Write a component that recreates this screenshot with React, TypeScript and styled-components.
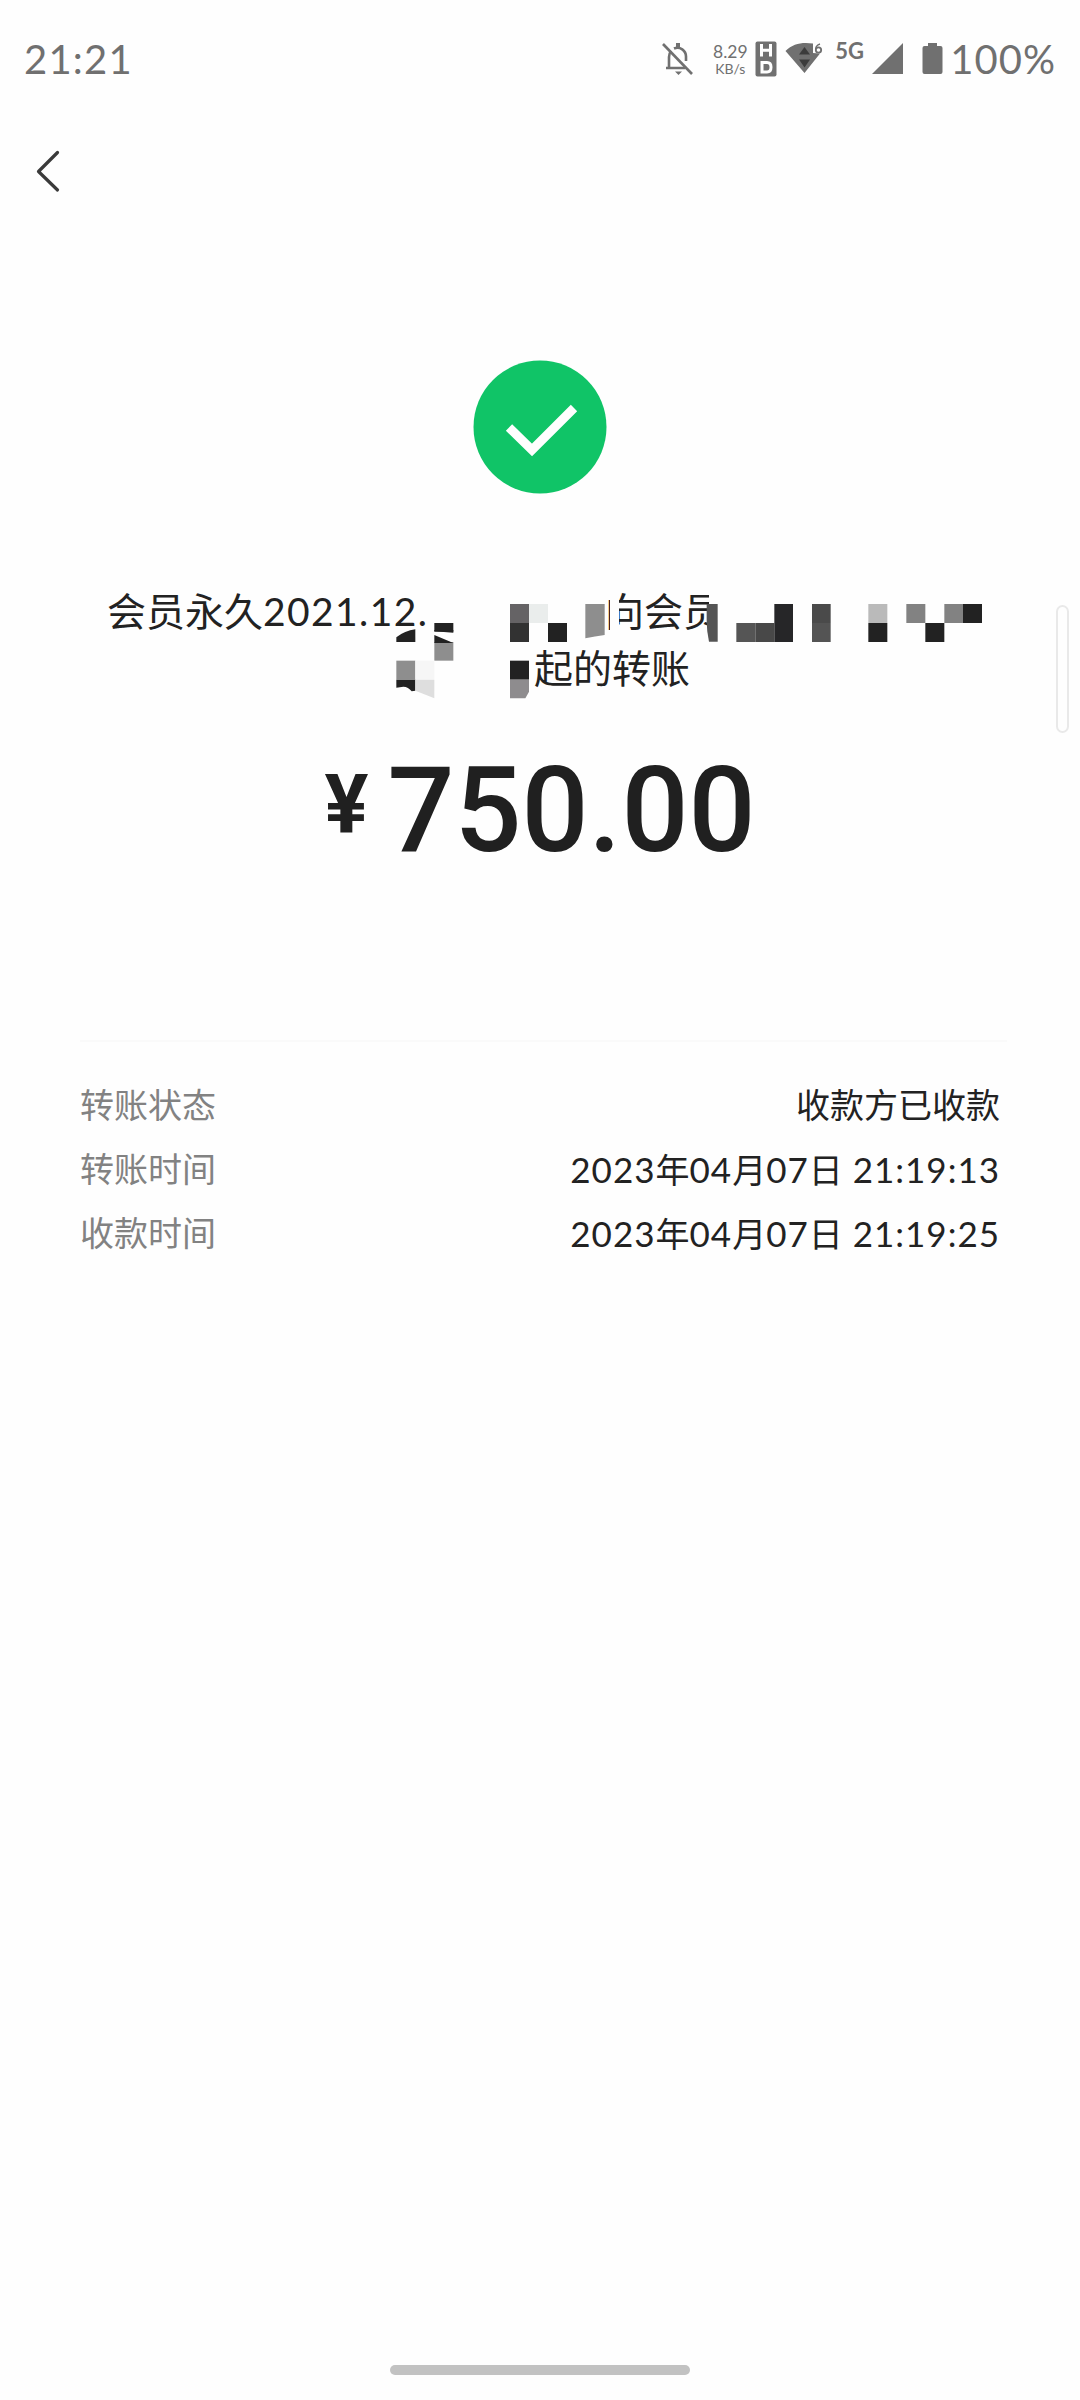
import React from "react";
import styled, { createGlobalStyle } from "styled-components";

const GlobalStyle = createGlobalStyle`
  body { margin: 0; background: #fefefe; }
  * { box-sizing: border-box; }
`;

const Screen = styled.div`
  position: relative;
  display: flex;
  flex-direction: column;
  width: 1080px;
  height: 2400px;
  background: #fefefe;
  color: #222;
  font-family: Lato, "Noto Sans CJK SC", sans-serif;
  overflow: hidden;
`;

const StatusBar = styled.header`
  display: flex;
  align-items: center;
  justify-content: space-between;
  height: 116px;
  padding: 2px 24px 0 24px;
  color: #707070;
`;

const StatusText = styled.span<{ $spacing: number }>`
  font-size: 40px;
  line-height: 48px;
  letter-spacing: ${(p) => p.$spacing}px;
`;

const StatusIcons = styled.div`
  display: flex;
  align-items: center;
  height: 48px;
`;

const Glyph = styled.svg<{ $gap: number }>`
  display: block;
  flex: none;
  margin-right: ${(p) => p.$gap}px;
`;

const Speed = styled.div`
  display: flex;
  flex-direction: column;
  align-items: center;
  width: 38px;
  margin-right: 6px;
  padding-top: 1px;
`;

const SpeedLine = styled.span<{ $size: number }>`
  font-size: ${(p) => p.$size}px;
  line-height: 17px;
  white-space: nowrap;
`;

const Network = styled.span`
  width: 37px;
  height: 40px;
  font: 700 22px/24px Lato, sans-serif;
`;

const NavBar = styled.nav`
  display: flex;
  align-items: center;
  height: 110px;
  padding-left: 35px;
`;

const BackButton = styled.button`
  display: flex;
  padding: 0;
  border: 0;
  background: none;
`;

const Result = styled.section`
  display: flex;
  flex-direction: column;
  align-items: center;
  padding-top: 134px;
`;

const Title = styled.div`
  position: relative;
  width: 900px;
  height: 140px;
  margin-top: 76px;
  padding: 13px 0 0 17px;
`;

const TitleLine = styled.div<{ $indent?: number }>`
  display: flex;
  height: 57px;
  padding-left: ${(p) => p.$indent ?? 0}px;
  font-size: 39px;
  line-height: 57px;
  white-space: pre;
`;

const TitleDate = styled.span`
  width: 342px;
  letter-spacing: 1.4px;
`;

const Mosaic = styled.svg`
  position: absolute;
  left: 0;
  top: 0;
`;

const Amount = styled.div`
  display: flex;
  align-items: flex-start;
  height: 140px;
  margin-top: 32px;
  font-family: Roboto, sans-serif;
  color: #202020;
`;

const Currency = styled.span`
  margin-right: 19px;
  padding-top: 14px;
  font-size: 82px;
  font-weight: 700;
  line-height: 96px;
`;

const Figure = styled.span`
  font-size: 118px;
  font-weight: 500;
  line-height: 138px;
`;

const Details = styled.dl`
  display: flex;
  flex-direction: column;
  margin: 158px 73px 0 80px;
  padding: 31px 7px 0 0;
  border-top: 2px solid #fafafa;
`;

const DetailRow = styled.div`
  display: flex;
  justify-content: space-between;
  height: 64px;
  font-size: 34px;
  line-height: 64px;
`;

const Label = styled.dt`
  color: #828282;
`;

const Value = styled.dd`
  margin: 0;
  white-space: pre;
`;

const Num = styled.span`
  font-size: 35px;
  letter-spacing: 1px;
`;

const ScrollThumb = styled.div`
  position: absolute;
  left: 1056px;
  top: 605px;
  width: 13px;
  height: 128px;
  border: 2px solid #e9e9e9;
  border-radius: 7px;
`;

const HomeArea = styled.footer`
  display: flex;
  justify-content: center;
  margin-top: auto;
  padding-bottom: 25px;
`;

const HomeBar = styled.div`
  width: 300px;
  height: 10px;
  border-radius: 5px;
  background: #c2c2c2;
`;

type Cell = [x: number, y: number, w: number, h: number, fill: string];

const cells: Cell[] = [
  [1033, 159, 57, 26, "#222"],
  [1033, 216, 57, 56, "#8e8e8e"],
  [919, 272, 57, 57, "#8e8e8e"],
  [976, 272, 57, 57, "#f6f6f6"],
  [1260, 102, 57, 57, "#656365"],
  [1317, 102, 57, 57, "#eaedec"],
  [1260, 159, 57, 57, "#323232"],
  [1374, 159, 57, 57, "#222"],
  [1260, 272, 57, 57, "#222"],
  [1939, 159, 57, 57, "#555"],
  [1996, 159, 57, 57, "#484848"],
  [2053, 102, 56, 114, "#262628"],
  [2166, 102, 56, 57, "#4a4a4a"],
  [2166, 159, 56, 57, "#545454"],
  [2335, 102, 57, 57, "#bababa"],
  [2335, 159, 57, 57, "#222"],
  [2449, 102, 57, 57, "#828282"],
  [2506, 159, 57, 57, "#222"],
  [2563, 102, 56, 57, "#828282"],
  [2619, 102, 57, 57, "#222"],
];

const details = [
  { label: "转账状态", value: ["收款方已收款"] },
  { label: "转账时间", value: ["2023", "年", "04", "月", "07", "日", " 21:19:13"] },
  { label: "收款时间", value: ["2023", "年", "04", "月", "07", "日", " 21:19:25"] },
];

const BellOff = () => (
  <Glyph $gap={18} width="32" height="34" viewBox="0 0 32 34" fill="none" stroke="#707070" strokeWidth="2.6">
    <path d="M2 2 31 32" />
    <path d="M5 26H24M8 26V15C8 12.5 8.8 10.5 10 9M13 6.5C19 4 25 8.5 25 14.5V19" />
    <path d="M17 1V5" strokeWidth="4" />
    <path d="M14 29.5H21L17.5 33Z" fill="#707070" stroke="none" />
  </Glyph>
);

const HdBadge = () => (
  <Glyph $gap={8} width="22" height="36" viewBox="0 0 22 36" fill="none">
    <rect x="0.5" y="0.5" width="21" height="35" rx="2" fill="#707070" />
    <path d="M6.5 3V15.5M15.5 3V15.5M6.5 9.3H15.5" stroke="#fefefe" strokeWidth="3" />
    <path d="M7 21.5H12Q16 21.5 16 26.3Q16 31 12 31H7Z" stroke="#fefefe" strokeWidth="3" />
  </Glyph>
);

const Wifi = () => (
  <Glyph $gap={12} width="38" height="36" viewBox="0 0 38 36">
    <path d="M0.5 10C8 2.5 17 1 28 2.5V12L35 12.5 19.5 32Z" fill="#707070" />
    <path d="M14 13.5 19.5 6 25 13.5Z" fill="#3c3c3c" />
    <path d="M14 18.5H25L19.5 26.5Z" fill="#3c3c3c" />
    <path d="M35 3C31.5 4 30.5 7 31 9" fill="none" stroke="#707070" strokeWidth="1.8" />
    <circle cx="33.5" cy="9" r="2.7" fill="#fefefe" stroke="#707070" strokeWidth="1.8" />
  </Glyph>
);

const Signal = () => (
  <Glyph $gap={18} width="32" height="34" viewBox="0 0 32 34">
    <path d="M31 1V32H0Z" fill="#707070" />
  </Glyph>
);

const Battery = () => (
  <Glyph $gap={7} width="21" height="34" viewBox="0 0 21 34">
    <path d="M6 1H15V4H18.5Q20.5 4 20.5 6V30Q20.5 32 18.5 32H2.5Q0.5 32 0.5 30V6Q0.5 4 2.5 4H6Z" fill="#707070" />
  </Glyph>
);

const TitleMosaic = () => (
  <Mosaic width="900" height="140" viewBox="0 0 2700 420">
    <path d="M1560 60H1587V200H1560Z" fill="#fefefe" />
    <path d="M1857 60H1980V215H1857Z" fill="#fefefe" />
    {cells.map(([x, y, w, h, fill]) => (
      <rect key={`${x}-${y}`} x={x} y={y} width={w} height={h} fill={fill} />
    ))}
    <path d="M1033 184 1090 188V180H1033ZM1033 195 1090 219H1033Z" fill="#222" />
    <path d="M919 202Q944 182 976 178V216H919Z" fill="#222" />
    <path d="M919 329H976V362L965 364Q955 350 940 350L919 353Z" fill="#222" />
    <path d="M976 329H1033V385L976 362Z" fill="#dedede" />
    <path d="M1486 102H1544V195Q1515 199 1486 205Z" fill="#8e8e8e" />
    <path d="M1850 102H1883V215H1857Q1850 185 1850 150Z" fill="#545454" />
    <path d="M1260 329H1317V365L1306 385H1260Z" fill="#8e8c8e" />
  </Mosaic>
);

export default function App() {
  return (
    <Screen>
      <GlobalStyle />
      <StatusBar>
        <StatusText $spacing={1.2}>21:21</StatusText>
        <StatusIcons>
          <BellOff />
          <Speed>
            <SpeedLine $size={17.5}>8.29</SpeedLine>
            <SpeedLine $size={14}>KB/s</SpeedLine>
          </Speed>
          <HdBadge />
          <Wifi />
          <Network>5G</Network>
          <Signal />
          <Battery />
          <StatusText $spacing={1}>100%</StatusText>
        </StatusIcons>
      </StatusBar>
      <NavBar>
        <BackButton aria-label="返回">
          <svg width="26" height="44" viewBox="0 0 26 44" fill="none" stroke="#3a3a3a" strokeWidth="3.2" strokeLinecap="round" strokeLinejoin="round">
            <path d="M22.5 3.5 3.5 22.5 22.5 41" />
          </svg>
        </BackButton>
      </NavBar>
      <Result>
        <svg width="134" height="134" viewBox="0 0 134 134">
          <circle cx="67" cy="67" r="66.5" fill="#10c467" />
          <path d="M36 67.5 59 90 101 48" fill="none" stroke="#fefefe" strokeWidth="9" />
        </svg>
        <Title>
          <TitleLine>
            <span>会员永久</span>
            <TitleDate>2021.12.</TitleDate>
            <span>向会员</span>
          </TitleLine>
          <TitleLine $indent={427}>起的转账</TitleLine>
          <TitleMosaic />
        </Title>
        <Amount>
          <Currency>¥</Currency>
          <Figure>750.00</Figure>
        </Amount>
      </Result>
      <Details>
        {details.map((row) => (
          <DetailRow key={row.label}>
            <Label>{row.label}</Label>
            <Value>
              {row.value.map((part, i) => (/\d/.test(part) ? <Num key={i}>{part}</Num> : part))}
            </Value>
          </DetailRow>
        ))}
      </Details>
      <ScrollThumb />
      <HomeArea>
        <HomeBar />
      </HomeArea>
    </Screen>
  );
}
